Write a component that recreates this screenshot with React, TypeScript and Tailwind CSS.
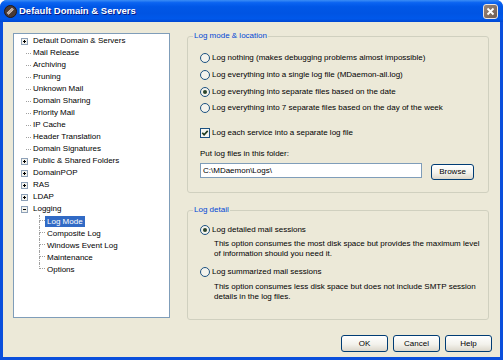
import React from 'react'

type TreeNode = { label: string; kind: 'plus' | 'minus' | 'leaf' }

const rootItems: TreeNode[] = [
  { label: 'Default Domain & Servers', kind: 'plus' },
  { label: 'Mail Release', kind: 'leaf' },
  { label: 'Archiving', kind: 'leaf' },
  { label: 'Pruning', kind: 'leaf' },
  { label: 'Unknown Mail', kind: 'leaf' },
  { label: 'Domain Sharing', kind: 'leaf' },
  { label: 'Priority Mail', kind: 'leaf' },
  { label: 'IP Cache', kind: 'leaf' },
  { label: 'Header Translation', kind: 'leaf' },
  { label: 'Domain Signatures', kind: 'leaf' },
  { label: 'Public & Shared Folders', kind: 'plus' },
  { label: 'DomainPOP', kind: 'plus' },
  { label: 'RAS', kind: 'plus' },
  { label: 'LDAP', kind: 'plus' },
  { label: 'Logging', kind: 'minus' },
]

const logChildren = ['Log Mode', 'Composite Log', 'Windows Event Log', 'Maintenance', 'Options']

function Expander({ open }: { open: boolean }) {
  return (
    <svg width="7" height="7" viewBox="0 0 7 7" className="shrink-0">
      <rect x="0.5" y="0.5" width="6" height="6" fill="#f3f3ee" stroke="#8ea1b8" />
      <path d="M2 3.5h3" stroke="#000" />
      {!open && <path d="M3.5 2v3" stroke="#000" />}
    </svg>
  )
}

function Radio({ checked = false }: { checked?: boolean }) {
  return (
    <svg width="10" height="10" viewBox="0 0 10 10" className="shrink-0">
      <circle cx="5" cy="5" r="4.5" fill="#f4f3ec" stroke="#1c5180" />
      {checked && <circle cx="5" cy="5" r="2" fill="#2a452a" />}
    </svg>
  )
}

function Checkbox() {
  return (
    <svg width="10" height="10" viewBox="0 0 10 10" className="shrink-0">
      <rect x="0.5" y="0.5" width="9" height="9" fill="#f6f6f1" stroke="#1c5180" />
      <path d="M2.3 4.8 L4.1 6.8 L7.7 2.9" fill="none" stroke="#1e3a1e" strokeWidth="1.6" />
    </svg>
  )
}

function Tree() {
  return (
    <div className="mt-[2px] w-[157px] h-[285px] shrink-0 border border-[#7f9db9] bg-white pt-[1px]">
      {rootItems.map((item) => (
        <div key={item.label} className="h-[12px] flex items-center pl-[7px] leading-[12px] whitespace-nowrap">
          <div className="w-[12px] shrink-0 flex items-center">
            {item.kind === 'leaf' ? (
              <div className="ml-[5px] w-[5px] border-t border-dotted border-[#a0a0a0]" />
            ) : (
              <Expander open={item.kind === 'minus'} />
            )}
          </div>
          <span>{item.label}</span>
        </div>
      ))}
      {logChildren.map((label, i) => {
        const last = i === logChildren.length - 1
        const selected = i === 0
        return (
          <div key={label} className="h-[12px] flex pl-[25px] leading-[11px] whitespace-nowrap">
            <div className="w-[6px] shrink-0 flex flex-col">
              <div className="h-[6px] border-l border-b border-dotted border-[#a0a0a0]" />
              <div className={`flex-1 ${last ? '' : 'border-l border-dotted border-[#a0a0a0]'}`} />
            </div>
            <div className="flex items-center">
              <span className={`h-[11px] px-[2px] ${selected ? 'bg-[#316ac5] text-white' : ''}`}>{label}</span>
            </div>
          </div>
        )
      })}
    </div>
  )
}

function OptionRow({ children, checked, className = '' }: { children: React.ReactNode; checked?: boolean; className?: string }) {
  return (
    <div className={`h-[13px] flex items-center gap-[2px] leading-[13px] whitespace-nowrap ${className}`}>
      <Radio checked={checked} />
      <span>{children}</span>
    </div>
  )
}

function XpButton({ label, className = '' }: { label: string; className?: string }) {
  return (
    <button className={`rounded-[3px] border border-[#003c74] bg-[linear-gradient(to_bottom,#ffffff,#f3f2ec_55%,#dcd7cb)] text-[8px] leading-none text-black ${className}`}>
      {label}
    </button>
  )
}

export default function App() {
  return (
    <div className="w-[503px] h-[360px] flex flex-col bg-[#0a4fdc] rounded-t-[7px] overflow-hidden font-['Liberation_Sans',Arial,sans-serif] text-[8px] text-black">
      {/* title bar */}
      <div className="h-[22px] shrink-0 flex items-center pl-[4px] pr-[5px] bg-[linear-gradient(to_bottom,#3b8df5_0%,#0b64f1_12%,#0057e7_30%,#0054e3_60%,#0058ea_85%,#0047d2_100%)]">
        <svg width="13" height="13" viewBox="0 0 13 13" className="shrink-0">
          <circle cx="6.5" cy="6.5" r="6" fill="#4a3a35" stroke="#241a17" />
          <path d="M3.6 8.9 L8.9 3.6" stroke="#e9ddd5" strokeWidth="2.6" />
          <path d="M3.6 8.9 L8.9 3.6" stroke="#6b5750" strokeWidth="0.8" />
        </svg>
        <span className="ml-[2px] text-[9.5px] font-bold text-white [text-shadow:1px_1px_#0a1883] whitespace-nowrap">
          Default Domain &amp; Servers
        </span>
        <div className="ml-auto w-[15px] h-[15px] rounded-[3px] border border-[#eee6e0] bg-[linear-gradient(135deg,#9a8679,#6f5d52)] flex items-center justify-center">
          <svg width="9" height="9" viewBox="0 0 9 9">
            <path d="M1.5 1.5 L7.5 7.5 M7.5 1.5 L1.5 7.5" stroke="#fff" strokeWidth="1.8" />
          </svg>
        </div>
      </div>

      {/* body */}
      <div className="flex-1 mx-[3px] mb-[3px] bg-[#ece9d8] pt-[9px] pl-[10px] pr-[8px] flex flex-col">
        <div className="flex gap-[17px]">
          <Tree />

          <div className="w-[302px] shrink-0 flex flex-col">
            <fieldset className="border border-[#d0d0bf] rounded-[3px] min-w-0">
              <legend className="ml-[5px] px-[1px] leading-[10px] text-[#0046d5]">Log mode &amp; location</legend>
              <div className="pl-[12px] pb-[12px] flex flex-col">
                <OptionRow className="mt-[10px]">Log nothing (makes debugging problems almost impossible)</OptionRow>
                <OptionRow className="mt-[4px]">Log everything into a single log file (MDaemon-all.log)</OptionRow>
                <OptionRow className="mt-[4px]" checked>Log everything into separate files based on the date</OptionRow>
                <OptionRow className="mt-[3px]">Log everything into 7 separate files based on the day of the week</OptionRow>
                <div className="mt-[12px] h-[13px] flex items-center gap-[2px] leading-[13px] whitespace-nowrap">
                  <Checkbox />
                  <span>Log each service into a separate log file</span>
                </div>
                <div className="mt-[8px] h-[13px] leading-[13px]">Put log files in this folder:</div>
                <div className="mt-[3px] flex items-start gap-[9px]">
                  <input
                    readOnly
                    value={'C:\\MDaemon\\Logs\\'}
                    className="w-[222px] h-[15px] border border-[#7f9db9] bg-white px-[2px] text-[8px] outline-none"
                  />
                  <XpButton label="Browse" className="mt-[1px] w-[43px] h-[16px]" />
                </div>
              </div>
            </fieldset>

            <fieldset className="mt-[12px] border border-[#d0d0bf] rounded-[3px] min-w-0">
              <legend className="ml-[5px] px-[1px] leading-[10px] text-[#0046d5]">Log detail</legend>
              <div className="pl-[12px] pb-[17px] flex flex-col">
                <OptionRow className="mt-[8px]" checked>Log detailed mail sessions</OptionRow>
                <div className="mt-[3px] ml-[14px] leading-[10px] whitespace-nowrap">
                  <div>This option consumes the most disk space but provides the maximum level</div>
                  <div>of information should you need it.</div>
                </div>
                <OptionRow className="mt-[6px]">Log summarized mail sessions</OptionRow>
                <div className="mt-[4px] ml-[14px] leading-[10px] whitespace-nowrap">
                  <div>This option consumes less disk space but does not include SMTP session</div>
                  <div>details in the log files.</div>
                </div>
              </div>
            </fieldset>
          </div>
        </div>

        <div className="mt-[15px] flex justify-end gap-[5px]">
          <XpButton label="OK" className="w-[47px] h-[17px]" />
          <XpButton label="Cancel" className="w-[47px] h-[17px]" />
          <XpButton label="Help" className="w-[47px] h-[17px]" />
        </div>
      </div>
    </div>
  )
}
